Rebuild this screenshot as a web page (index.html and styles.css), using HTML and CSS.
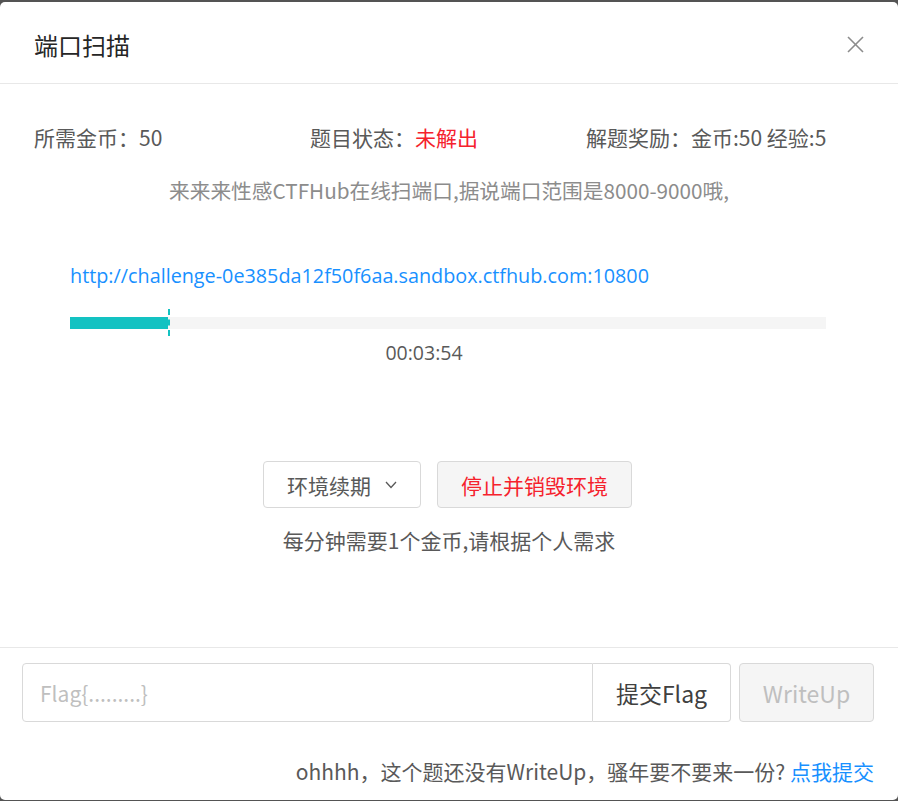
FILE: index.html
```html
<!DOCTYPE html>
<html lang="zh-CN">
<head>
  <meta charset="UTF-8" />
  <title>端口扫描</title>
  <link rel="stylesheet" href="styles.css">
</head>
<body>
  <div class="modal">
    <div class="modal-header">
      <div class="modal-title">端口扫描</div>
      <svg class="close" width="17" height="17" viewBox="0 0 17 17">
        <line x1="1" y1="1" x2="16" y2="16" stroke="#8c8c8c" stroke-width="1.6" />
        <line x1="16" y1="1" x2="1" y2="16" stroke="#8c8c8c" stroke-width="1.6" />
      </svg>
    </div>

    <div class="modal-body">
      <div class="info-row">
        <div>所需金币：50</div>
        <div>题目状态：<span class="red">未解出</span></div>
        <div>解题奖励：金币:50 经验:5</div>
      </div>
      <div class="desc">来来来性感CTFHub在线扫端口,据说端口范围是8000-9000哦,</div>

      <div class="env">
        <a class="env-url" href="#">http://challenge-0e385da12f50f6aa.sandbox.ctfhub.com:10800</a>
        <div class="progress">
          <div class="progress-fill" style="width: 13%"></div>
          <div class="progress-mark" style="left: 13%"></div>
        </div>
        <div class="timer">00:03:54</div>
      </div>

      <div class="actions">
        <button class="btn">环境续期
          <svg class="chev" width="12" height="8" viewBox="0 0 12 8">
            <polyline points="1,1 6,6.5 11,1" fill="none" stroke="#595959" stroke-width="1.3" />
          </svg>
        </button>
        <button class="btn btn-danger">停止并销毁环境</button>
      </div>
      <div class="hint">每分钟需要1个金币,请根据个人需求</div>
    </div>

    <div class="modal-footer">
      <div class="flag-row">
        <div class="flag-group">
          <input class="flag-input" type="text" placeholder="Flag{.........}">
          <div class="flag-submit">提交Flag</div>
        </div>
        <button class="btn-writeup">WriteUp</button>
      </div>
      <div class="footer-text">ohhhh，这个题还没有WriteUp，骚年要不要来一份? <a href="#">点我提交</a></div>
    </div>
  </div>
</body>
</html>
```

FILE: styles.css
```css
* {
  margin: 0;
  padding: 0;
  box-sizing: border-box;
}

body {
  background: #545454;
  font-family: "Noto Sans CJK SC", "Noto Sans", sans-serif;
  color: #595959;
  width: 898px;
  height: 801px;
  overflow: hidden;
}

.modal {
  margin-top: 2px;
  width: 898px;
  height: 798px;
  background: #fff;
  border-radius: 5px;
  display: flex;
  flex-direction: column;
}

.modal-header {
  height: 82px;
  padding: 0 34px;
  display: flex;
  align-items: center;
  justify-content: space-between;
  border-bottom: 1px solid #e8e8e8;
}

.modal-title {
  font-size: 24px;
  color: #262626;
  padding-top: 4px;
}

.close {
  margin-right: 0;
  margin-top: 4px;
}

.modal-body {
  flex: 1;
  padding-top: 38px;
}

.info-row {
  display: grid;
  grid-template-columns: repeat(3, 1fr);
  padding: 0 36px 0 34px;
  font-size: 21px;
  line-height: 30px;
}

.red {
  color: #f5222d;
}

.desc {
  margin-top: 23px;
  text-align: center;
  font-size: 20.7px;
  line-height: 30px;
  color: #8c8c8c;
}

.env {
  padding: 0 72px 0 70px;
  margin-top: 56px;
}

.env-url {
  display: block;
  font-size: 19.8px;
  line-height: 30px;
  color: #1890ff;
  text-decoration: none;
  font-family: "Open Sans", "Noto Sans", sans-serif;
}

.progress {
  position: relative;
  margin-top: 26px;
  height: 12px;
  background: #f5f5f5;
}

.progress-fill {
  height: 100%;
  background: #13c2c2;
}

.progress-mark {
  position: absolute;
  top: -8px;
  bottom: -7px;
  width: 2px;
  border-left: 2px dashed #13c2c2;
}

.timer {
  margin-top: 12px;
  text-align: center;
  font-size: 19.5px;
  line-height: 24px;
  padding-right: 48px;
  font-family: "Open Sans", "Noto Sans", sans-serif;
}

.actions {
  margin-top: 96px;
  display: flex;
  justify-content: center;
  gap: 16px;
  padding-right: 3px;
}

.btn {
  height: 47px;
  padding: 0 23px;
  font-size: 21px;
  font-family: inherit;
  color: #595959;
  background: #fff;
  border: 1px solid #d9d9d9;
  border-radius: 4px;
  display: flex;
  align-items: center;
  gap: 14px;
}

.btn-danger {
  background: #f5f5f5;
  color: #f5222d;
}

.hint {
  margin-top: 17px;
  text-align: center;
  font-size: 21px;
  line-height: 30px;
}

.modal-footer {
  border-top: 1px solid #e8e8e8;
  padding: 15px 24px 0 22px;
  height: 153px;
}

.flag-row {
  display: flex;
  gap: 8px;
}

.flag-group {
  flex: 1;
  display: flex;
  height: 59px;
}

.flag-input {
  flex: 1;
  border: 1px solid #d9d9d9;
  border-radius: 4px 0 0 4px;
  padding: 0 17px;
  font-size: 21px;
  font-family: inherit;
  color: #595959;
  outline: none;
}

.flag-input::placeholder {
  color: #bfbfbf;
}

.flag-submit {
  width: 138px;
  border: 1px solid #d9d9d9;
  border-left: none;
  border-radius: 0 4px 4px 0;
  display: flex;
  align-items: center;
  justify-content: center;
  font-size: 23px;
  color: #404040;
}

.btn-writeup {
  width: 135px;
  height: 59px;
  background: #f5f5f5;
  border: 1px solid #d9d9d9;
  border-radius: 4px;
  color: #bfbfbf;
  font-size: 23px;
  font-family: inherit;
}

.footer-text {
  margin-top: 34px;
  text-align: right;
  font-size: 21px;
  line-height: 30px;
}

.footer-text a {
  color: #1890ff;
  text-decoration: none;
}
```
